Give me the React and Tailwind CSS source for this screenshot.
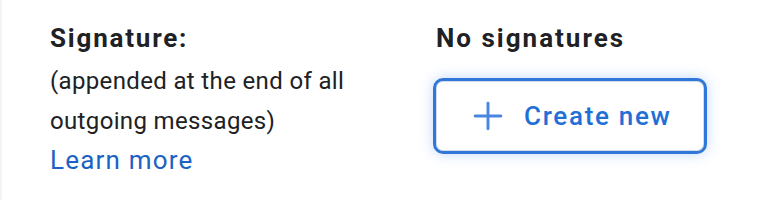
import { Plus } from "lucide-react";

export default function App() {
  return (
    <div className="w-[770px] h-[200px] bg-white border-l-2 border-[#f1f3f4] overflow-hidden" style={{ fontFamily: "Roboto, 'Noto Sans', sans-serif" }}>
      <div className="flex pt-[22px]">
        <div className="w-[434px] pl-[48px] text-[#202124]">
          <div className="text-[26px] font-bold leading-[32px] tracking-[1.8px]">Signature:</div>
          <div className="text-[24px] leading-[40px] mt-[7px] tracking-[0.35px]">
            (appended at the end of all
            <br />
            outgoing messages)
          </div>
          <a href="#" className="block text-[26px] leading-[38px] tracking-[1.2px] text-[#1a62c4]">
            Learn more
          </a>
        </div>
        <div className="flex flex-col items-start">
          <div className="text-[26px] font-bold leading-[32px] text-[#202124] tracking-[2px]">No signatures</div>
          <button
            type="button"
            className="mt-[24px] w-[274px] h-[76px] -ml-[3px] flex items-center justify-start gap-[14px] pl-[30px] rounded-[10px] border-[3px] border-[#2f77d9] bg-white text-[#1f6fd6] shadow-[0_0_14px_rgba(52,120,230,0.28),inset_0_0_0_1px_#d6dde8]"
          >
            <Plus size={44} strokeWidth={1.6} className="text-[#4a86e0]" />
            <span className="text-[26px] font-medium tracking-[1.7px]">Create new</span>
          </button>
        </div>
      </div>
    </div>
  );
}
